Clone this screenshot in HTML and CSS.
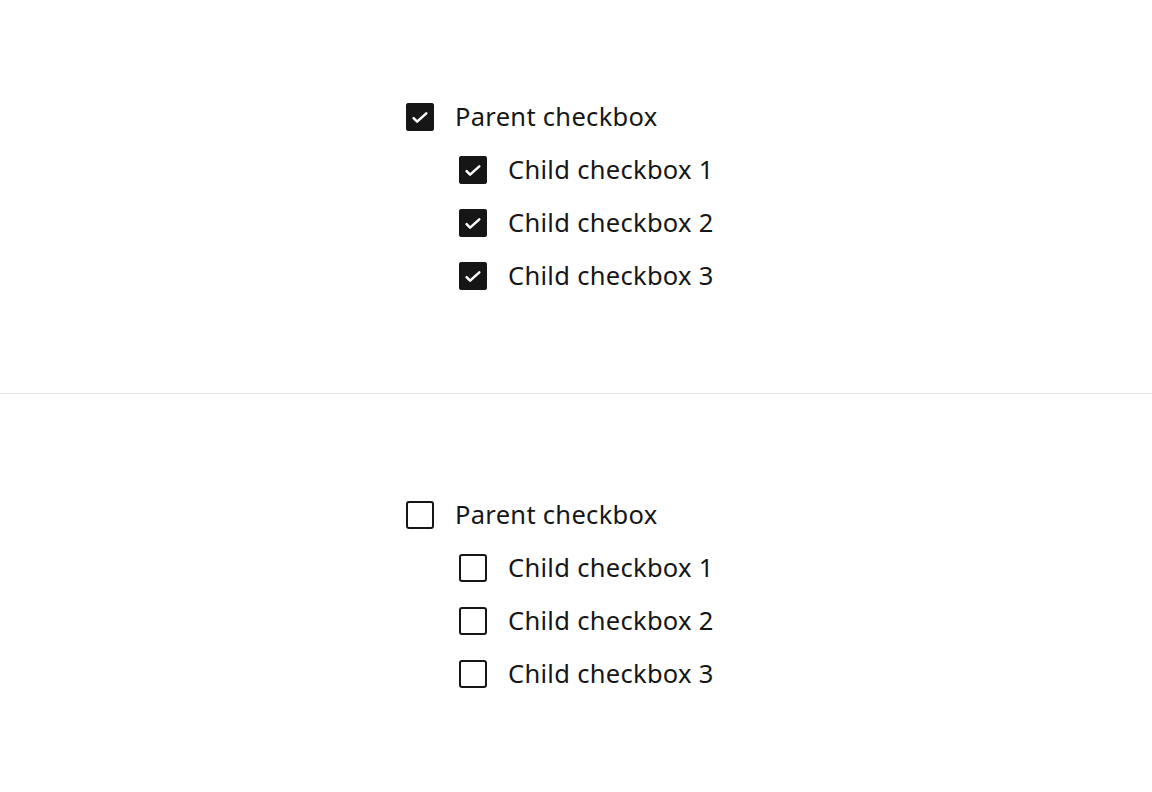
FILE: index.html
```html
<!DOCTYPE html>
<html lang="en">
<head>
<meta charset="utf-8">
<title>Checkbox groups</title>
<link rel="stylesheet" href="styles.css">
</head>
<body>
<main class="page">
  <section class="panel panel--top">
    <div class="group">
      <label class="item">
        <span class="box box--checked"><svg viewBox="0 0 28 28"><path d="M7.6 15.2l3.5 3.5 9.2-8.4"/></svg></span>
        <span class="text">Parent checkbox</span>
      </label>
      <div class="children">
        <label class="item">
          <span class="box box--checked"><svg viewBox="0 0 28 28"><path d="M7.6 15.2l3.5 3.5 9.2-8.4"/></svg></span>
          <span class="text">Child checkbox 1</span>
        </label>
        <label class="item">
          <span class="box box--checked"><svg viewBox="0 0 28 28"><path d="M7.6 15.2l3.5 3.5 9.2-8.4"/></svg></span>
          <span class="text">Child checkbox 2</span>
        </label>
        <label class="item">
          <span class="box box--checked"><svg viewBox="0 0 28 28"><path d="M7.6 15.2l3.5 3.5 9.2-8.4"/></svg></span>
          <span class="text">Child checkbox 3</span>
        </label>
      </div>
    </div>
  </section>
  <section class="panel panel--bottom">
    <div class="group">
      <label class="item">
        <span class="box"></span>
        <span class="text">Parent checkbox</span>
      </label>
      <div class="children">
        <label class="item">
          <span class="box"></span>
          <span class="text">Child checkbox 1</span>
        </label>
        <label class="item">
          <span class="box"></span>
          <span class="text">Child checkbox 2</span>
        </label>
        <label class="item">
          <span class="box"></span>
          <span class="text">Child checkbox 3</span>
        </label>
      </div>
    </div>
  </section>
</main>
</body>
</html>
```

FILE: styles.css
```css
* { box-sizing: border-box; }

html, body {
  margin: 0;
  padding: 0;
  background: #ffffff;
}

body {
  font-family: "Noto Sans", "Open Sans", sans-serif;
  color: #161616;
}

.page {
  display: flex;
  flex-direction: column;
  width: 1152px;
  height: 792px;
}

.panel {
  display: flex;
  justify-content: center;
}

.panel--top {
  height: 393px;
  padding-top: 103px;
}

.panel--bottom {
  height: 399px;
  padding-top: 107px;
  border-top: 1px solid #e6e6e6;
}

.group {
  width: 340px;
  display: flex;
  flex-direction: column;
  gap: 25px;
}

.children {
  display: flex;
  flex-direction: column;
  gap: 25px;
  padding-left: 53px;
}

.item {
  display: flex;
  align-items: center;
  gap: 21px;
  height: 28px;
}

.box {
  width: 28px;
  height: 28px;
  flex: none;
  border-radius: 3px;
  background: #ffffff;
  box-shadow: inset 0 0 0 2px #161616;
  display: flex;
}

.box--checked {
  background: #161616;
}

.box svg {
  width: 28px;
  height: 28px;
}

.box svg path {
  fill: none;
  stroke: #ffffff;
  stroke-width: 2.5;
  stroke-linecap: round;
  stroke-linejoin: round;
}

.text {
  font-size: 25.5px;
  line-height: 28px;
  letter-spacing: 0.3px;
  margin-top: -2px;
}
```
